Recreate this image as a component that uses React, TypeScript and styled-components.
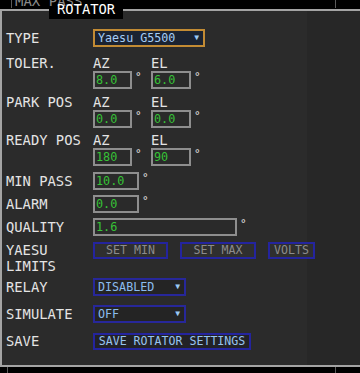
import React from 'react'
import styled, { createGlobalStyle } from 'styled-components'

const GlobalStyle = createGlobalStyle`
    html, body {
        margin: 0;
        padding: 0;
        background: #000;
        overflow: hidden;
    }
    body {
        font-family: "DejaVu Sans Mono", "Liberation Mono", monospace;
    }
`

const Page = styled.div`
    width: 360px;
    height: 373px;
    background: #000;
    overflow: hidden;
`

const Strip = styled.div<{ $left: number }>`
    height: 8px;
    margin-left: ${p => p.$left}px;
    width: ${p => 336 - p.$left}px;
    border-left: 1px solid #5a5a5a;
    border-right: 1px solid #5a5a5a;
    overflow: hidden;
    color: #8a8a8a;
    font-size: 14px;
    line-height: 14px;
    padding-left: 3px;
    box-sizing: border-box;

    span {
        display: block;
        margin-top: -6px;
    }
`

const Panel = styled.fieldset`
    margin: -8px 0 0 0;
    padding: 10px 4px 15px 4px;
    width: 360px;
    box-sizing: border-box;
    border: 2px solid #a4a4a4;
    border-right: none;
    min-inline-size: 0;
    background: linear-gradient(to right, #2b2b2b 305px, #272727 305px);
`

const Legend = styled.legend`
    margin-left: 43px;
    padding: 0 8px;
    height: 19px;
    line-height: 19px;
    background: #000;
    color: #fff;
    font-size: 13.8px;
`

const Form = styled.div`
    display: flex;
    flex-direction: column;
`

const Row = styled.div<{ $mt?: number; $top?: boolean }>`
    display: grid;
    grid-template-columns: 87px 1fr;
    align-items: ${p => (p.$top ? 'start' : 'center')};
    margin-top: ${p => p.$mt ?? 0}px;
`

const Label = styled.div<{ $lh?: number }>`
    color: #e4e4e4;
    font-size: 13.8px;
    line-height: ${p => p.$lh ?? 15}px;
`

const Pairs = styled.div`
    display: grid;
    grid-template-columns: 58px 58px;
`

const SubLabel = styled.div`
    color: #e4e4e4;
    font-size: 13.8px;
    line-height: 15px;
`

const Field = styled.div`
    display: flex;
    align-items: flex-start;
`

const NumInput = styled.input<{ $w: number }>`
    display: block;
    width: ${p => p.$w}px;
    height: 18px;
    box-sizing: border-box;
    margin: 0;
    padding: 0 1px;
    border: 2px solid #8e8e8e;
    background: #2a2a2a;
    color: #36c236;
    font-family: inherit;
    font-size: 11.8px;
    outline: none;
`

const Deg = styled.span`
    color: #e4e4e4;
    font-size: 11px;
    line-height: 11px;
    margin-left: 3px;
`

const SelectWrap = styled.div<{ $w: number }>`
    position: relative;
    width: ${p => p.$w}px;
    height: 18px;

    &::after {
        content: '▼';
        position: absolute;
        right: 6px;
        top: 4px;
        font-size: 8px;
        line-height: 10px;
        color: #9cc8f4;
        pointer-events: none;
    }
`

const Select = styled.select<{ $gold?: boolean }>`
    display: block;
    appearance: none;
    width: 100%;
    height: 18px;
    box-sizing: border-box;
    margin: 0;
    padding: 0 3px;
    border: 2px solid ${p => (p.$gold ? '#c28b34' : '#27279a')};
    border-radius: 0;
    background: ${p => (p.$gold ? '#1b2331' : '#242424')};
    color: ${p => (p.$gold ? '#a6cdf6' : '#8cbcee')};
    font-family: inherit;
    font-size: 11.7px;
    outline: none;
`

const Buttons = styled.div`
    display: flex;
    gap: 12px;
`

const Btn = styled.button<{ $w: number; $main?: boolean }>`
    display: block;
    width: ${p => p.$w}px;
    height: 17px;
    box-sizing: border-box;
    margin: 0;
    padding: 0;
    border: 2px solid #24249e;
    background: ${p => (p.$main ? '#222226' : '#2f2f2f')};
    color: ${p => (p.$main ? '#98c4f0' : '#8c8c8c')};
    font-family: inherit;
    font-size: 11.6px;
    line-height: 13px;
    text-align: center;
`

const NumField = ({ value, w }: { value: string; w: number }) => (
    <Field>
        <NumInput $w={w} defaultValue={value} readOnly />
        <Deg>°</Deg>
    </Field>
)

const AzElRow = ({ label, az, el, mt }: { label: string; az: string; el: string; mt: number }) => (
    <Row $mt={mt} $top>
        <Label>{label}</Label>
        <Pairs>
            <div>
                <SubLabel>AZ</SubLabel>
                <NumField value={az} w={39} />
            </div>
            <div>
                <SubLabel>EL</SubLabel>
                <NumField value={el} w={40} />
            </div>
        </Pairs>
    </Row>
)

const App: React.FC = () => {
    return (
        <Page>
            <GlobalStyle />
            <Strip $left={11}>
                <span>MAX PASS</span>
            </Strip>
            <Panel>
                <Legend>ROTATOR</Legend>
                <Form>
                    <Row>
                        <Label>TYPE</Label>
                        <SelectWrap $w={112}>
                            <Select $gold defaultValue="g5500">
                                <option value="g5500">Yaesu G5500</option>
                            </Select>
                        </SelectWrap>
                    </Row>
                    <AzElRow label="TOLER." az="8.0" el="6.0" mt={9} />
                    <AzElRow label="PARK POS" az="0.0" el="0.0" mt={6} />
                    <AzElRow label="READY POS" az="180" el="90" mt={5} />
                    <Row $mt={6}>
                        <Label>MIN PASS</Label>
                        <NumField value="10.0" w={46} />
                    </Row>
                    <Row $mt={5}>
                        <Label>ALARM</Label>
                        <NumField value="0.0" w={46} />
                    </Row>
                    <Row $mt={5}>
                        <Label>QUALITY</Label>
                        <NumField value="1.6" w={144} />
                    </Row>
                    <Row $mt={6} $top>
                        <Label $lh={16}>YAESU<br />LIMITS</Label>
                        <Buttons>
                            <Btn $w={75}>SET MIN</Btn>
                            <Btn $w={76}>SET MAX</Btn>
                            <Btn $w={47}>VOLTS</Btn>
                        </Buttons>
                    </Row>
                    <Row $mt={4}>
                        <Label>RELAY</Label>
                        <SelectWrap $w={93}>
                            <Select defaultValue="off">
                                <option value="off">DISABLED</option>
                            </Select>
                        </SelectWrap>
                    </Row>
                    <Row $mt={9}>
                        <Label>SIMULATE</Label>
                        <SelectWrap $w={93}>
                            <Select defaultValue="off">
                                <option value="off">OFF</option>
                            </Select>
                        </SelectWrap>
                    </Row>
                    <Row $mt={10}>
                        <Label>SAVE</Label>
                        <div>
                            <Btn $w={158} $main>SAVE ROTATOR SETTINGS</Btn>
                        </div>
                    </Row>
                </Form>
            </Panel>
            <Strip $left={7} />
        </Page>
    )
}

export default App
